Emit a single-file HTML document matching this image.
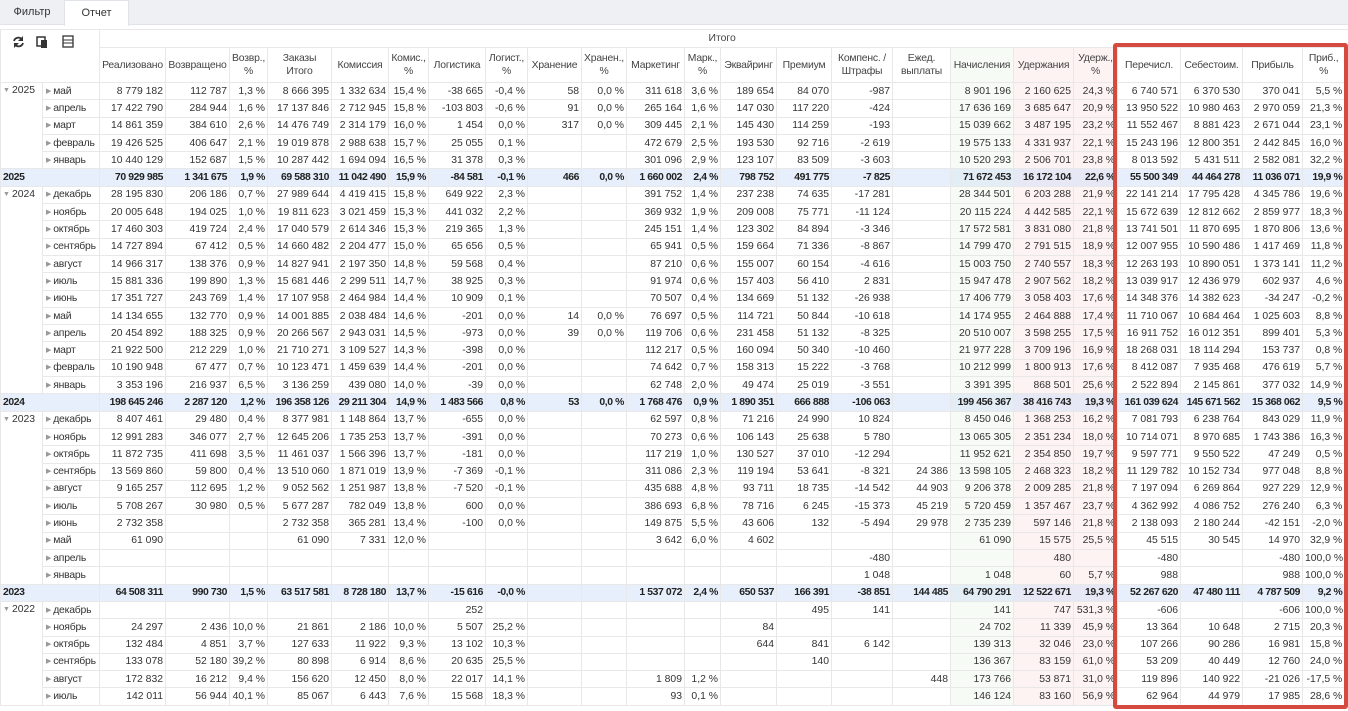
<!DOCTYPE html>
<html><head><meta charset="utf-8"><style>
*{box-sizing:border-box;margin:0;padding:0}
body{width:1348px;height:711px;overflow:hidden;background:#fff;font-family:"Liberation Sans",sans-serif;font-size:10.4px;color:#333;position:relative}
.tabs{position:absolute;left:0;top:0;width:1348px;height:25px;background:#eef0f4;border-bottom:1px solid #e0e3e8}
.tab{position:absolute;top:0;height:25px;line-height:25px;text-align:center;font-size:11px;color:#333}
.tab.a{background:#fff;border:1px solid #e0e3e8;border-bottom:none;height:26px}
table{position:absolute;left:0;top:29px;border-collapse:collapse;table-layout:fixed;width:1348px}
td{border:1px solid #e8e8e8;padding:0 2px;text-align:right;white-space:nowrap;overflow:hidden;height:17.3px;line-height:15px}
td:last-child{padding-right:6px}
tr.h1 td{height:18px;text-align:center;color:#444}
tr.h2 td{height:35px;text-align:center;color:#444;line-height:13px;white-space:normal;letter-spacing:-0.2px}
td.y{text-align:left;vertical-align:top;padding-left:2px;border-bottom:1px solid #e8e8e8}
td.m{text-align:left;padding-left:3px;letter-spacing:-0.2px}
tr.t td{background:rgba(205,224,248,0.5);font-weight:bold;color:#222;letter-spacing:-0.4px}
tr.t td.l{text-align:left;padding-left:2px}
.ar{color:#999;font-size:7px;vertical-align:1px;margin-right:2px}
.box{position:absolute;left:1113px;top:43px;width:235px;height:666px;border:4px solid #d44a3e;border-radius:3px}
</style></head><body>
<div class="tabs"><div class="tab" style="left:0;width:64px">Фильтр</div><div class="tab a" style="left:64px;width:65px">Отчет</div></div>
<table>
<colgroup><col style="width:42px"><col style="width:57px"><col style="width:66px"><col style="width:64px"><col style="width:38px"><col style="width:64px"><col style="width:57px"><col style="width:40px"><col style="width:57px"><col style="width:42px"><col style="width:54px"><col style="width:45px"><col style="width:58px"><col style="width:36px"><col style="width:56px"><col style="width:55px"><col style="width:61px"><col style="width:58px"><col style="width:63px;background:#f7fbf5"><col style="width:60px;background:#fef3f3"><col style="width:44px;background:#fef3f3"><col style="width:63px"><col style="width:62px"><col style="width:60px"><col style="width:46px"></colgroup>
<tr class="h1"><td colspan="2" rowspan="2" style="vertical-align:top;text-align:left;padding:4px 0 0 10px;background:#fff"><svg width="80" height="16" viewBox="0 0 80 16"><g fill="none" stroke="#333" stroke-width="1.8"><path d="M11 5.5A4.5 4.5 0 0 0 3 7"/><path d="M4 10.5A4.5 4.5 0 0 0 12 9"/></g><path d="M12 2v5H7z" fill="#333"/><path d="M3 14V9h5z" fill="#333"/><rect x="26" y="3" width="8" height="9" fill="none" stroke="#333" stroke-width="1.5"/><rect x="30" y="6" width="6" height="8" fill="#333"/><rect x="52" y="2" width="10" height="11" fill="none" stroke="#333" stroke-width="1.3"/><path d="M52 6h10M52 9h10" stroke="#333" stroke-width="0.9"/></svg></td><td colspan="23">Итого</td></tr>
<tr class="h2"><td>Реализовано</td><td>Возвращено</td><td>Возвр.,<br>%</td><td>Заказы<br>Итого</td><td>Комиссия</td><td>Комис.,<br>%</td><td>Логистика</td><td>Логист.,<br>%</td><td>Хранение</td><td>Хранен.,<br>%</td><td>Маркетинг</td><td>Марк.,<br>%</td><td>Эквайринг</td><td>Премиум</td><td>Компенс. /<br>Штрафы</td><td>Ежед.<br>выплаты</td><td>Начисления</td><td>Удержания</td><td>Удерж.,<br>%</td><td>Перечисл.</td><td>Себестоим.</td><td>Прибыль</td><td>Приб.,<br>%</td></tr>

<tr><td class="y" rowspan="5"><span class="ar">▼</span>2025</td><td class="m"><span class="ar">▶</span>май</td><td>8 779 182</td><td>112 787</td><td>1,3 %</td><td>8 666 395</td><td>1 332 634</td><td>15,4 %</td><td>-38 665</td><td>-0,4 %</td><td>58</td><td>0,0 %</td><td>311 618</td><td>3,6 %</td><td>189 654</td><td>84 070</td><td>-987</td><td></td><td>8 901 196</td><td>2 160 625</td><td>24,3 %</td><td>6 740 571</td><td>6 370 530</td><td>370 041</td><td>5,5 %</td></tr>
<tr><td class="m"><span class="ar">▶</span>апрель</td><td>17 422 790</td><td>284 944</td><td>1,6 %</td><td>17 137 846</td><td>2 712 945</td><td>15,8 %</td><td>-103 803</td><td>-0,6 %</td><td>91</td><td>0,0 %</td><td>265 164</td><td>1,6 %</td><td>147 030</td><td>117 220</td><td>-424</td><td></td><td>17 636 169</td><td>3 685 647</td><td>20,9 %</td><td>13 950 522</td><td>10 980 463</td><td>2 970 059</td><td>21,3 %</td></tr>
<tr><td class="m"><span class="ar">▶</span>март</td><td>14 861 359</td><td>384 610</td><td>2,6 %</td><td>14 476 749</td><td>2 314 179</td><td>16,0 %</td><td>1 454</td><td>0,0 %</td><td>317</td><td>0,0 %</td><td>309 445</td><td>2,1 %</td><td>145 430</td><td>114 259</td><td>-193</td><td></td><td>15 039 662</td><td>3 487 195</td><td>23,2 %</td><td>11 552 467</td><td>8 881 423</td><td>2 671 044</td><td>23,1 %</td></tr>
<tr><td class="m"><span class="ar">▶</span>февраль</td><td>19 426 525</td><td>406 647</td><td>2,1 %</td><td>19 019 878</td><td>2 988 638</td><td>15,7 %</td><td>25 055</td><td>0,1 %</td><td></td><td></td><td>472 679</td><td>2,5 %</td><td>193 530</td><td>92 716</td><td>-2 619</td><td></td><td>19 575 133</td><td>4 331 937</td><td>22,1 %</td><td>15 243 196</td><td>12 800 351</td><td>2 442 845</td><td>16,0 %</td></tr>
<tr><td class="m"><span class="ar">▶</span>январь</td><td>10 440 129</td><td>152 687</td><td>1,5 %</td><td>10 287 442</td><td>1 694 094</td><td>16,5 %</td><td>31 378</td><td>0,3 %</td><td></td><td></td><td>301 096</td><td>2,9 %</td><td>123 107</td><td>83 509</td><td>-3 603</td><td></td><td>10 520 293</td><td>2 506 701</td><td>23,8 %</td><td>8 013 592</td><td>5 431 511</td><td>2 582 081</td><td>32,2 %</td></tr>
<tr class="t"><td class="l" colspan="2">2025</td><td>70 929 985</td><td>1 341 675</td><td>1,9 %</td><td>69 588 310</td><td>11 042 490</td><td>15,9 %</td><td>-84 581</td><td>-0,1 %</td><td>466</td><td>0,0 %</td><td>1 660 002</td><td>2,4 %</td><td>798 752</td><td>491 775</td><td>-7 825</td><td></td><td>71 672 453</td><td>16 172 104</td><td>22,6 %</td><td>55 500 349</td><td>44 464 278</td><td>11 036 071</td><td>19,9 %</td></tr>

<tr><td class="y" rowspan="12"><span class="ar">▼</span>2024</td><td class="m"><span class="ar">▶</span>декабрь</td><td>28 195 830</td><td>206 186</td><td>0,7 %</td><td>27 989 644</td><td>4 419 415</td><td>15,8 %</td><td>649 922</td><td>2,3 %</td><td></td><td></td><td>391 752</td><td>1,4 %</td><td>237 238</td><td>74 635</td><td>-17 281</td><td></td><td>28 344 501</td><td>6 203 288</td><td>21,9 %</td><td>22 141 214</td><td>17 795 428</td><td>4 345 786</td><td>19,6 %</td></tr>
<tr><td class="m"><span class="ar">▶</span>ноябрь</td><td>20 005 648</td><td>194 025</td><td>1,0 %</td><td>19 811 623</td><td>3 021 459</td><td>15,3 %</td><td>441 032</td><td>2,2 %</td><td></td><td></td><td>369 932</td><td>1,9 %</td><td>209 008</td><td>75 771</td><td>-11 124</td><td></td><td>20 115 224</td><td>4 442 585</td><td>22,1 %</td><td>15 672 639</td><td>12 812 662</td><td>2 859 977</td><td>18,3 %</td></tr>
<tr><td class="m"><span class="ar">▶</span>октябрь</td><td>17 460 303</td><td>419 724</td><td>2,4 %</td><td>17 040 579</td><td>2 614 346</td><td>15,3 %</td><td>219 365</td><td>1,3 %</td><td></td><td></td><td>245 151</td><td>1,4 %</td><td>123 302</td><td>84 894</td><td>-3 346</td><td></td><td>17 572 581</td><td>3 831 080</td><td>21,8 %</td><td>13 741 501</td><td>11 870 695</td><td>1 870 806</td><td>13,6 %</td></tr>
<tr><td class="m"><span class="ar">▶</span>сентябрь</td><td>14 727 894</td><td>67 412</td><td>0,5 %</td><td>14 660 482</td><td>2 204 477</td><td>15,0 %</td><td>65 656</td><td>0,5 %</td><td></td><td></td><td>65 941</td><td>0,5 %</td><td>159 664</td><td>71 336</td><td>-8 867</td><td></td><td>14 799 470</td><td>2 791 515</td><td>18,9 %</td><td>12 007 955</td><td>10 590 486</td><td>1 417 469</td><td>11,8 %</td></tr>
<tr><td class="m"><span class="ar">▶</span>август</td><td>14 966 317</td><td>138 376</td><td>0,9 %</td><td>14 827 941</td><td>2 197 350</td><td>14,8 %</td><td>59 568</td><td>0,4 %</td><td></td><td></td><td>87 210</td><td>0,6 %</td><td>155 007</td><td>60 154</td><td>-4 616</td><td></td><td>15 003 750</td><td>2 740 557</td><td>18,3 %</td><td>12 263 193</td><td>10 890 051</td><td>1 373 141</td><td>11,2 %</td></tr>
<tr><td class="m"><span class="ar">▶</span>июль</td><td>15 881 336</td><td>199 890</td><td>1,3 %</td><td>15 681 446</td><td>2 299 511</td><td>14,7 %</td><td>38 925</td><td>0,3 %</td><td></td><td></td><td>91 974</td><td>0,6 %</td><td>157 403</td><td>56 410</td><td>2 831</td><td></td><td>15 947 478</td><td>2 907 562</td><td>18,2 %</td><td>13 039 917</td><td>12 436 979</td><td>602 937</td><td>4,6 %</td></tr>
<tr><td class="m"><span class="ar">▶</span>июнь</td><td>17 351 727</td><td>243 769</td><td>1,4 %</td><td>17 107 958</td><td>2 464 984</td><td>14,4 %</td><td>10 909</td><td>0,1 %</td><td></td><td></td><td>70 507</td><td>0,4 %</td><td>134 669</td><td>51 132</td><td>-26 938</td><td></td><td>17 406 779</td><td>3 058 403</td><td>17,6 %</td><td>14 348 376</td><td>14 382 623</td><td>-34 247</td><td>-0,2 %</td></tr>
<tr><td class="m"><span class="ar">▶</span>май</td><td>14 134 655</td><td>132 770</td><td>0,9 %</td><td>14 001 885</td><td>2 038 484</td><td>14,6 %</td><td>-201</td><td>0,0 %</td><td>14</td><td>0,0 %</td><td>76 697</td><td>0,5 %</td><td>114 721</td><td>50 844</td><td>-10 618</td><td></td><td>14 174 955</td><td>2 464 888</td><td>17,4 %</td><td>11 710 067</td><td>10 684 464</td><td>1 025 603</td><td>8,8 %</td></tr>
<tr><td class="m"><span class="ar">▶</span>апрель</td><td>20 454 892</td><td>188 325</td><td>0,9 %</td><td>20 266 567</td><td>2 943 031</td><td>14,5 %</td><td>-973</td><td>0,0 %</td><td>39</td><td>0,0 %</td><td>119 706</td><td>0,6 %</td><td>231 458</td><td>51 132</td><td>-8 325</td><td></td><td>20 510 007</td><td>3 598 255</td><td>17,5 %</td><td>16 911 752</td><td>16 012 351</td><td>899 401</td><td>5,3 %</td></tr>
<tr><td class="m"><span class="ar">▶</span>март</td><td>21 922 500</td><td>212 229</td><td>1,0 %</td><td>21 710 271</td><td>3 109 527</td><td>14,3 %</td><td>-398</td><td>0,0 %</td><td></td><td></td><td>112 217</td><td>0,5 %</td><td>160 094</td><td>50 340</td><td>-10 460</td><td></td><td>21 977 228</td><td>3 709 196</td><td>16,9 %</td><td>18 268 031</td><td>18 114 294</td><td>153 737</td><td>0,8 %</td></tr>
<tr><td class="m"><span class="ar">▶</span>февраль</td><td>10 190 948</td><td>67 477</td><td>0,7 %</td><td>10 123 471</td><td>1 459 639</td><td>14,4 %</td><td>-201</td><td>0,0 %</td><td></td><td></td><td>74 642</td><td>0,7 %</td><td>158 313</td><td>15 222</td><td>-3 768</td><td></td><td>10 212 999</td><td>1 800 913</td><td>17,6 %</td><td>8 412 087</td><td>7 935 468</td><td>476 619</td><td>5,7 %</td></tr>
<tr><td class="m"><span class="ar">▶</span>январь</td><td>3 353 196</td><td>216 937</td><td>6,5 %</td><td>3 136 259</td><td>439 080</td><td>14,0 %</td><td>-39</td><td>0,0 %</td><td></td><td></td><td>62 748</td><td>2,0 %</td><td>49 474</td><td>25 019</td><td>-3 551</td><td></td><td>3 391 395</td><td>868 501</td><td>25,6 %</td><td>2 522 894</td><td>2 145 861</td><td>377 032</td><td>14,9 %</td></tr>
<tr class="t"><td class="l" colspan="2">2024</td><td>198 645 246</td><td>2 287 120</td><td>1,2 %</td><td>196 358 126</td><td>29 211 304</td><td>14,9 %</td><td>1 483 566</td><td>0,8 %</td><td>53</td><td>0,0 %</td><td>1 768 476</td><td>0,9 %</td><td>1 890 351</td><td>666 888</td><td>-106 063</td><td></td><td>199 456 367</td><td>38 416 743</td><td>19,3 %</td><td>161 039 624</td><td>145 671 562</td><td>15 368 062</td><td>9,5 %</td></tr>

<tr><td class="y" rowspan="10"><span class="ar">▼</span>2023</td><td class="m"><span class="ar">▶</span>декабрь</td><td>8 407 461</td><td>29 480</td><td>0,4 %</td><td>8 377 981</td><td>1 148 864</td><td>13,7 %</td><td>-655</td><td>0,0 %</td><td></td><td></td><td>62 597</td><td>0,8 %</td><td>71 216</td><td>24 990</td><td>10 824</td><td></td><td>8 450 046</td><td>1 368 253</td><td>16,2 %</td><td>7 081 793</td><td>6 238 764</td><td>843 029</td><td>11,9 %</td></tr>
<tr><td class="m"><span class="ar">▶</span>ноябрь</td><td>12 991 283</td><td>346 077</td><td>2,7 %</td><td>12 645 206</td><td>1 735 253</td><td>13,7 %</td><td>-391</td><td>0,0 %</td><td></td><td></td><td>70 273</td><td>0,6 %</td><td>106 143</td><td>25 638</td><td>5 780</td><td></td><td>13 065 305</td><td>2 351 234</td><td>18,0 %</td><td>10 714 071</td><td>8 970 685</td><td>1 743 386</td><td>16,3 %</td></tr>
<tr><td class="m"><span class="ar">▶</span>октябрь</td><td>11 872 735</td><td>411 698</td><td>3,5 %</td><td>11 461 037</td><td>1 566 396</td><td>13,7 %</td><td>-181</td><td>0,0 %</td><td></td><td></td><td>117 219</td><td>1,0 %</td><td>130 527</td><td>37 010</td><td>-12 294</td><td></td><td>11 952 621</td><td>2 354 850</td><td>19,7 %</td><td>9 597 771</td><td>9 550 522</td><td>47 249</td><td>0,5 %</td></tr>
<tr><td class="m"><span class="ar">▶</span>сентябрь</td><td>13 569 860</td><td>59 800</td><td>0,4 %</td><td>13 510 060</td><td>1 871 019</td><td>13,9 %</td><td>-7 369</td><td>-0,1 %</td><td></td><td></td><td>311 086</td><td>2,3 %</td><td>119 194</td><td>53 641</td><td>-8 321</td><td>24 386</td><td>13 598 105</td><td>2 468 323</td><td>18,2 %</td><td>11 129 782</td><td>10 152 734</td><td>977 048</td><td>8,8 %</td></tr>
<tr><td class="m"><span class="ar">▶</span>август</td><td>9 165 257</td><td>112 695</td><td>1,2 %</td><td>9 052 562</td><td>1 251 987</td><td>13,8 %</td><td>-7 520</td><td>-0,1 %</td><td></td><td></td><td>435 688</td><td>4,8 %</td><td>93 711</td><td>18 735</td><td>-14 542</td><td>44 903</td><td>9 206 378</td><td>2 009 285</td><td>21,8 %</td><td>7 197 094</td><td>6 269 864</td><td>927 229</td><td>12,9 %</td></tr>
<tr><td class="m"><span class="ar">▶</span>июль</td><td>5 708 267</td><td>30 980</td><td>0,5 %</td><td>5 677 287</td><td>782 049</td><td>13,8 %</td><td>600</td><td>0,0 %</td><td></td><td></td><td>386 693</td><td>6,8 %</td><td>78 716</td><td>6 245</td><td>-15 373</td><td>45 219</td><td>5 720 459</td><td>1 357 467</td><td>23,7 %</td><td>4 362 992</td><td>4 086 752</td><td>276 240</td><td>6,3 %</td></tr>
<tr><td class="m"><span class="ar">▶</span>июнь</td><td>2 732 358</td><td></td><td></td><td>2 732 358</td><td>365 281</td><td>13,4 %</td><td>-100</td><td>0,0 %</td><td></td><td></td><td>149 875</td><td>5,5 %</td><td>43 606</td><td>132</td><td>-5 494</td><td>29 978</td><td>2 735 239</td><td>597 146</td><td>21,8 %</td><td>2 138 093</td><td>2 180 244</td><td>-42 151</td><td>-2,0 %</td></tr>
<tr><td class="m"><span class="ar">▶</span>май</td><td>61 090</td><td></td><td></td><td>61 090</td><td>7 331</td><td>12,0 %</td><td></td><td></td><td></td><td></td><td>3 642</td><td>6,0 %</td><td>4 602</td><td></td><td></td><td></td><td>61 090</td><td>15 575</td><td>25,5 %</td><td>45 515</td><td>30 545</td><td>14 970</td><td>32,9 %</td></tr>
<tr><td class="m"><span class="ar">▶</span>апрель</td><td></td><td></td><td></td><td></td><td></td><td></td><td></td><td></td><td></td><td></td><td></td><td></td><td></td><td></td><td>-480</td><td></td><td></td><td>480</td><td></td><td>-480</td><td></td><td>-480</td><td>100,0 %</td></tr>
<tr><td class="m"><span class="ar">▶</span>январь</td><td></td><td></td><td></td><td></td><td></td><td></td><td></td><td></td><td></td><td></td><td></td><td></td><td></td><td></td><td>1 048</td><td></td><td>1 048</td><td>60</td><td>5,7 %</td><td>988</td><td></td><td>988</td><td>100,0 %</td></tr>
<tr class="t"><td class="l" colspan="2">2023</td><td>64 508 311</td><td>990 730</td><td>1,5 %</td><td>63 517 581</td><td>8 728 180</td><td>13,7 %</td><td>-15 616</td><td>-0,0 %</td><td></td><td></td><td>1 537 072</td><td>2,4 %</td><td>650 537</td><td>166 391</td><td>-38 851</td><td>144 485</td><td>64 790 291</td><td>12 522 671</td><td>19,3 %</td><td>52 267 620</td><td>47 480 111</td><td>4 787 509</td><td>9,2 %</td></tr>

<tr><td class="y" rowspan="6"><span class="ar">▼</span>2022</td><td class="m"><span class="ar">▶</span>декабрь</td><td></td><td></td><td></td><td></td><td></td><td></td><td>252</td><td></td><td></td><td></td><td></td><td></td><td></td><td>495</td><td>141</td><td></td><td>141</td><td>747</td><td>531,3 %</td><td>-606</td><td></td><td>-606</td><td>100,0 %</td></tr>
<tr><td class="m"><span class="ar">▶</span>ноябрь</td><td>24 297</td><td>2 436</td><td>10,0 %</td><td>21 861</td><td>2 186</td><td>10,0 %</td><td>5 507</td><td>25,2 %</td><td></td><td></td><td></td><td></td><td>84</td><td></td><td></td><td></td><td>24 702</td><td>11 339</td><td>45,9 %</td><td>13 364</td><td>10 648</td><td>2 715</td><td>20,3 %</td></tr>
<tr><td class="m"><span class="ar">▶</span>октябрь</td><td>132 484</td><td>4 851</td><td>3,7 %</td><td>127 633</td><td>11 922</td><td>9,3 %</td><td>13 102</td><td>10,3 %</td><td></td><td></td><td></td><td></td><td>644</td><td>841</td><td>6 142</td><td></td><td>139 313</td><td>32 046</td><td>23,0 %</td><td>107 266</td><td>90 286</td><td>16 981</td><td>15,8 %</td></tr>
<tr><td class="m"><span class="ar">▶</span>сентябрь</td><td>133 078</td><td>52 180</td><td>39,2 %</td><td>80 898</td><td>6 914</td><td>8,6 %</td><td>20 635</td><td>25,5 %</td><td></td><td></td><td></td><td></td><td></td><td>140</td><td></td><td></td><td>136 367</td><td>83 159</td><td>61,0 %</td><td>53 209</td><td>40 449</td><td>12 760</td><td>24,0 %</td></tr>
<tr><td class="m"><span class="ar">▶</span>август</td><td>172 832</td><td>16 212</td><td>9,4 %</td><td>156 620</td><td>12 450</td><td>8,0 %</td><td>22 017</td><td>14,1 %</td><td></td><td></td><td>1 809</td><td>1,2 %</td><td></td><td></td><td></td><td>448</td><td>173 766</td><td>53 871</td><td>31,0 %</td><td>119 896</td><td>140 922</td><td>-21 026</td><td>-17,5 %</td></tr>
<tr><td class="m"><span class="ar">▶</span>июль</td><td>142 011</td><td>56 944</td><td>40,1 %</td><td>85 067</td><td>6 443</td><td>7,6 %</td><td>15 568</td><td>18,3 %</td><td></td><td></td><td>93</td><td>0,1 %</td><td></td><td></td><td></td><td></td><td>146 124</td><td>83 160</td><td>56,9 %</td><td>62 964</td><td>44 979</td><td>17 985</td><td>28,6 %</td></tr>
</table>
<div class="box"></div>
</body></html>
